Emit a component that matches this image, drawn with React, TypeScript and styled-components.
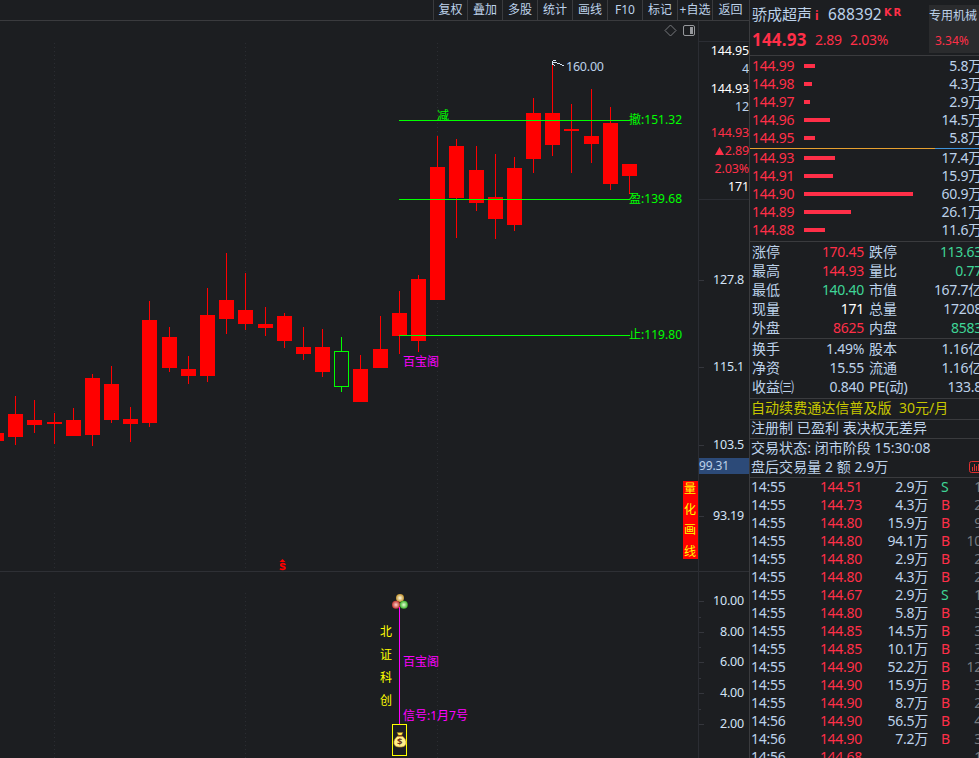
import React from 'react';
import styled, { createGlobalStyle } from 'styled-components';

const sans = '"Noto Sans", "Noto Sans CJK SC", sans-serif';
const c = {
  bg: '#1c1e21',
  line: '#3a3b3e',
  faint: '#2b2d33',
  text: '#bdd2ea',
  white: '#ffffff',
  red: '#ff2f48',
  green: '#3fd597',
  dim: '#777b80',
  yellow: '#c6c600',
};

const Global = createGlobalStyle`
  html, body { margin: 0; padding: 0; background: ${c.bg}; overflow: hidden; }
  * { box-sizing: border-box; }
  svg { display: block; flex: none; }
  svg text { white-space: pre; }
`;

const Page = styled.div`
  width: 979px;
  height: 758px;
  display: flex;
  overflow: hidden;
  background: ${c.bg};
  color: ${c.text};
  font-family: ${sans};
  font-size: 14px;
  white-space: pre;
`;
const Left = styled.main`
  width: 750px;
  flex: none;
  display: flex;
  flex-direction: column;
  border-right: 1px solid ${c.line};
`;
const Toolbar = styled.nav`
  height: 21px;
  flex: none;
  display: flex;
  padding-left: 433px;
  border-bottom: 1px solid ${c.line};
  font-size: 12px;
  line-height: 19px;
`;
const ToolItem = styled.div<{ $w: number }>`
  width: ${p => p.$w}px;
  flex: none;
  border-left: 1px solid ${c.line};
  display: flex;
  justify-content: center;
`;
const ChartArea = styled.div`
  display: flex;
  flex: 1;
`;
const Axis = styled.div`
  width: 51px;
  border-left: 1px solid ${c.faint};
  display: flex;
  flex-direction: column;
  overflow: hidden;
`;
const QuoteBox = styled.div`
  height: 159px;
  flex: none;
  margin-top: 20px;
  width: 50px;
  border-top: 1px solid ${c.faint};
  border-bottom: 1px solid ${c.faint};
  font-size: 12.5px;
  letter-spacing: -0.15px;
  display: flex;
  flex-direction: column;
`;
const QuoteLine = styled.div<{ $color: string; $h: number }>`
  height: ${p => p.$h}px;
  line-height: ${p => p.$h}px;
  color: ${p => p.$color};
  display: flex;
  justify-content: flex-end;
  align-items: center;
`;

const Right = styled.aside`
  width: 232px;
  flex: none;
  display: flex;
  flex-direction: column;
  letter-spacing: -0.28px;
`;
const Header = styled.header`
  height: 56px;
  flex: none;
  display: flex;
  border-bottom: 1px solid ${c.line};
`;
const HeaderMain = styled.div`
  width: 179px;
  flex: none;
  padding: 4px 0 0 2px;
`;
const NameRow = styled.div`
  height: 22px;
  line-height: 20px;
  display: flex;
  font-size: 15px;
  letter-spacing: 0;
`;
const InfoMark = styled.b`
  color: ${c.red};
  font-size: 12px;
  line-height: 24px;
  width: 13px;
  padding-left: 3px;
`;
const Code = styled.span`
  font-size: 15.5px;
  letter-spacing: 0.1px;
  padding-left: 3px;
  width: 58px;
`;
const KR = styled.b`
  color: ${c.red};
  font: bold 10px/18px "DejaVu Sans", sans-serif;
  letter-spacing: 1.8px;
  padding-left: 1px;
`;
const PriceRow = styled.div`
  height: 28px;
  line-height: 28px;
  color: ${c.red};
  display: flex;
`;
const BigPrice = styled.b`
  font-size: 17px;
  letter-spacing: 0.2px;
  width: 63px;
`;
const Change = styled.span`
  width: 35px;
`;
const Industry = styled.div`
  width: 54px;
  height: 48px;
  margin-top: 5px;
  background: #2a2b2d;
  font-size: 12px;
  letter-spacing: 0;
  line-height: 22px;
`;
const IndustryPct = styled.div`
  color: ${c.red};
  padding: 3px 0 0 6px;
`;
const Book = styled.div<{ $bottom?: boolean }>`
  height: 92px;
  flex: none;
  padding-top: ${p => (p.$bottom ? 0 : 1)}px;
`;
const BookRow = styled.div`
  height: 18px;
  line-height: 18px;
  display: flex;
  align-items: center;
`;
const BookPrice = styled.span`
  width: 54px;
  padding-left: 2px;
  color: ${c.red};
`;
const Bar = styled.i<{ $w: number }>`
  width: ${p => p.$w}px;
  height: 4px;
  background: ${c.red};
`;
const BookVol = styled.span`
  margin-left: auto;
`;
const Balance = styled.div`
  height: 1px;
  flex: none;
  display: flex;
  background: #3d93dc;
`;
const BalanceBuy = styled.i`
  width: 185px;
  background: #e6a030;
`;
const Stats = styled.div<{ $h: number }>`
  height: ${p => p.$h}px;
  flex: none;
  border-top: 1px solid ${c.line};
`;
const StatRow = styled.div`
  height: 19px;
  line-height: 19px;
  display: grid;
  grid-template-columns: 50px 62px 5px 50px 1fr;
  padding-left: 2px;
`;
const StatLabel = styled.span`
  letter-spacing: 0;
`;
const Value = styled.span<{ $color?: string }>`
  text-align: right;
  color: ${p => p.$color ?? c.text};
`;
const Note = styled.div<{ $h: number; $color?: string; $plain?: boolean }>`
  height: ${p => p.$h}px;
  line-height: ${p => p.$h - 3}px;
  flex: none;
  padding: 0 0 2px 1px;
  letter-spacing: 0.05px;
  color: ${p => p.$color ?? c.text};
  border-top: ${p => (p.$plain ? 'none' : `1px solid ${c.line}`)};
  display: flex;
  align-items: center;
`;
const NoteIcon = styled.svg`
  margin: 0 -1px 0 auto;
`;
const Ticks = styled.div`
  flex: none;
  border-top: 1px solid ${c.line};
`;
const TickRow = styled.div`
  height: 18px;
  line-height: 18px;
  display: grid;
  grid-template-columns: 35px 76px 66px 29px 1fr;
  padding-left: 1px;
`;
const Side = styled.span<{ $sell: boolean }>`
  color: ${p => (p.$sell ? c.green : c.red)};
  padding-left: 13px;
`;

// [left, body top, body bottom, wick top, wick bottom]
const candles: number[][] = [
  [-11, 433, 441, 433, 441], [8, 414, 437, 396, 445], [27, 420, 425, 400, 433],
  [47, 422, 424, 413, 444], [66, 420, 436, 408, 436], [85, 378, 435, 374, 446],
  [104, 384, 420, 366, 423], [123, 419, 424, 407, 442], [142, 320, 423, 301, 427],
  [162, 337, 368, 327, 372], [181, 369, 376, 356, 384], [200, 315, 376, 288, 382],
  [219, 300, 319, 253, 334], [238, 310, 324, 273, 330], [258, 324, 328, 307, 336],
  [277, 316, 341, 313, 348], [296, 347, 354, 327, 360], [315, 347, 372, 329, 377],
  [353, 369, 402, 355, 402], [373, 349, 368, 316, 368], [392, 313, 336, 291, 354],
  [411, 279, 341, 275, 352], [430, 167, 300, 136, 300], [449, 146, 198, 139, 238],
  [469, 170, 203, 146, 211], [488, 197, 219, 154, 239], [507, 168, 225, 157, 231],
  [526, 113, 159, 98, 173], [545, 113, 145, 64, 156], [564, 129, 131, 104, 173],
  [584, 136, 144, 89, 163], [603, 123, 184, 107, 190], [622, 164, 176, 164, 194],
];

const grid = [54, 245, 437];
const vertical = (chars: string, x: number, ys: number[]) =>
  chars.split('').map((ch, i) => (
    <text key={ch} x={x} y={ys[i]} fontSize="12" fill="#ffff00">{ch}</text>
  ));

function Plot() {
  return (
    <svg width="698" height="737" viewBox="0 21 698 737" shapeRendering="crispEdges" fontFamily={sans} fontSize="12">
      {grid.map(x => (
        <g key={x} stroke="#2b2d32" strokeDasharray="1 3">
          <line x1={x + 0.5} x2={x + 0.5} y1="43" y2="571" />
          <line x1={x + 0.5} x2={x + 0.5} y1="593" y2="758" />
        </g>
      ))}
      <rect x="0" y="571" width="698" height="1" fill="#2e3035" />
      {candles.map(([x, t, b, wt, wb]) => (
        <g key={x} fill="#ff0000">
          <rect x={x + 7} y={wt} width="1" height={wb - wt} />
          <rect x={x} y={t} width="15" height={b - t} />
        </g>
      ))}
      <g stroke="#00ff00" fill="none">
        <rect x="334.5" y="351.5" width="14" height="35" />
        <path d="M341.5 337v14M341.5 387v5" />
        <path d="M399 120.5H630M399 199.5H630M399 335.5H630" />
      </g>
      <g fill="#00ff00">
        <text x="437" y="120">减</text>
        <text x="629" y="124" textLength="53">撤:151.32</text>
        <text x="629" y="203" textLength="53">盈:139.68</text>
        <text x="629" y="339" textLength="53">止:119.80</text>
      </g>
      <g fill="#d4e2f4">
        <rect x="553" y="60" width="3" height="1" />
        <rect x="552" y="61" width="1" height="4" />
        <rect x="553" y="62" width="4" height="1" />
        <rect x="557" y="63" width="3" height="1" />
        <rect x="560" y="64" width="2" height="1" />
        <rect x="562" y="65" width="2" height="1" />
        <rect x="554" y="65" width="1" height="1" />
        <rect x="553" y="64" width="1" height="1" />
      </g>
      <text x="566" y="71" fill={c.text} fontSize="12.5" textLength="38">160.00</text>
      <path d="M670.5 25L676 30.5L670.5 36L665 30.5Z" fill="none" stroke="#77797d" shapeRendering="auto" />
      <g shapeRendering="auto">
        <rect x="683.5" y="25.5" width="11" height="10" rx="1.5" fill="none" stroke="#96989c" />
        <rect x="690" y="27" width="3" height="7" fill="#96989c" />
      </g>
      <rect x="683" y="481" width="15" height="78" fill="#ff0000" />
      {vertical('量化画线', 684, [493, 514, 534, 556])}
      <g stroke="#ff0000" fill="none" strokeWidth="1.8" shapeRendering="auto">
        <path d="M285.6 564.8C283.6 563 280.8 563.4 280.8 565C280.8 567 285.2 566 285.2 568C285.2 569.7 281.6 569.8 280 568.6" />
        <path d="M282.5 559L285.5 562H279.5Z" fill="#ff0000" stroke="none" />
      </g>
      <g fill="#ff00ff">
        <text x="403" y="366" textLength="36">百宝阁</text>
        <text x="403" y="666" textLength="36">百宝阁</text>
        <text x="403" y="720" textLength="65">信号:1月7号</text>
        <rect x="399" y="607" width="1" height="117" />
      </g>
      {vertical('北证科创', 380, [636, 659, 682, 705])}
      <defs>
        <radialGradient id="gold"><stop stopColor="#fffbe4" /><stop offset="1" stopColor="#c0922e" /></radialGradient>
        <radialGradient id="rose"><stop stopColor="#ffd0c8" /><stop offset="1" stopColor="#c03430" /></radialGradient>
        <radialGradient id="leaf"><stop stopColor="#e4ffd4" /><stop offset="1" stopColor="#3cb02c" /></radialGradient>
      </defs>
      <g shapeRendering="auto">
        <circle cx="400" cy="598" r="4" fill="url(#gold)" />
        <circle cx="396" cy="604.8" r="4" fill="url(#rose)" />
        <circle cx="403.8" cy="604.8" r="4" fill="url(#leaf)" />
      </g>
      <rect x="392.5" y="724.5" width="14" height="31" fill="none" stroke="#ffff00" />
      <g shapeRendering="auto">
        <path d="M397 732.5H403L401.5 735.5H398.5Z" fill="#ffe94a" stroke="#8a6420" strokeWidth=".6" />
        <path d="M398 736H402C405 738 406.5 740.5 406 743.5C405.5 746.6 402.5 747 400 747S394.5 746.6 394 743.5C393.6 740.5 395 738 398 736Z" fill="#ffef8c" stroke="#c89a20" strokeWidth=".7" />
        <path d="M397.8 735.8H402.2" stroke="#7b2f12" strokeWidth="1.2" />
        <text x="397" y="745" fontSize="9.5" fontWeight="700" fill="#6b2f18">$</text>
      </g>
    </svg>
  );
}

const priceTicks: [string, number][] = [['127.8', 280], ['115.1', 367], ['103.5', 445], ['93.19', 516]];
const subTicks: [string, number][] = [['10.00', 601], ['8.00', 632], ['6.00', 662], ['4.00', 693], ['2.00', 724]];

function Scale() {
  return (
    <svg width="50" height="558" viewBox="699 200 50 558" shapeRendering="crispEdges" fontFamily={sans} fontSize="12.5" fill="#d3e3f6">
      {[...priceTicks, ...subTicks].map(([s, y]) => (
        <g key={s}>
          <rect x="699" y={y} width="5" height="1" fill="#34363c" />
          <text x="744" y={y + 4} textAnchor="end" letterSpacing="-0.2">{s}</text>
        </g>
      ))}
      {[617, 647, 678, 709].map(y => <rect key={y} x="699" y={y} width="2" height="1" fill="#34363c" />)}
      <rect x="699" y="458" width="50" height="16" fill="#2c4a78" />
      <text x="699" y="470" fill={c.text} fontSize="12" textLength="30">99.31</text>
      <rect x="699" y="571" width="50" height="1" fill="#2e3035" />
    </svg>
  );
}

const tools: [string, number][] = [
  ['复权', 34], ['叠加', 35], ['多股', 35], ['统计', 35], ['画线', 35], ['F10', 35], ['标记', 35], ['+自选', 35], ['返回', 36],
];
const asks: [string, number, string][] = [
  ['144.99', 11, '5.8万'], ['144.98', 8, '4.3万'], ['144.97', 6, '2.9万'], ['144.96', 26, '14.5万'], ['144.95', 11, '5.8万'],
];
const bids: [string, number, string][] = [
  ['144.93', 31, '17.4万'], ['144.91', 29, '15.9万'], ['144.90', 109, '60.9万'], ['144.89', 47, '26.1万'], ['144.88', 21, '11.6万'],
];
type Stat = [string, string, string, string, string?, string?];
const stats1: Stat[] = [
  ['涨停', '170.45', '跌停', '113.63', c.red, c.green],
  ['最高', '144.93', '量比', '0.77', c.red, c.green],
  ['最低', '140.40', '市值', '167.7亿', c.green],
  ['现量', '171', '总量', '17208', c.white],
  ['外盘', '8625', '内盘', '8583', c.red, c.green],
];
const stats2: Stat[] = [
  ['换手', '1.49%', '股本', '1.16亿'],
  ['净资', '15.55', '流通', '1.16亿'],
  ['收益㈢', '0.840', 'PE(动)', '133.8'],
];
const ticks: string[][] = [
  ['14:55', '144.51', '2.9万', 'S', '1'], ['14:55', '144.73', '4.3万', 'B', '2'],
  ['14:55', '144.80', '15.9万', 'B', '9'], ['14:55', '144.80', '94.1万', 'B', '10'],
  ['14:55', '144.80', '2.9万', 'B', '2'], ['14:55', '144.80', '4.3万', 'B', '2'],
  ['14:55', '144.67', '2.9万', 'S', '1'], ['14:55', '144.80', '5.8万', 'B', '3'],
  ['14:55', '144.85', '14.5万', 'B', '3'], ['14:55', '144.85', '10.1万', 'B', '3'],
  ['14:55', '144.90', '52.2万', 'B', '12'], ['14:55', '144.90', '15.9万', 'B', '3'],
  ['14:55', '144.90', '8.7万', 'B', '2'], ['14:56', '144.90', '56.5万', 'B', '4'],
  ['14:56', '144.90', '7.2万', 'B', '3'], ['14:56', '144.68', '', '', '1'],
];

function Level({ rows, bottom }: { rows: [string, number, string][]; bottom?: boolean }) {
  return (
    <Book $bottom={bottom}>
      {rows.map(([price, w, vol]) => (
        <BookRow key={price}>
          <BookPrice>{price}</BookPrice>
          <Bar $w={w} />
          <BookVol>{vol}</BookVol>
        </BookRow>
      ))}
    </Book>
  );
}

function StatGroup({ rows, h }: { rows: Stat[]; h: number }) {
  return (
    <Stats $h={h}>
      {rows.map(([a, av, b, bv, ac, bc]) => (
        <StatRow key={a}>
          <StatLabel>{a}</StatLabel>
          <Value $color={ac}>{av}</Value>
          <span />
          <StatLabel>{b}</StatLabel>
          <Value $color={bc}>{bv}</Value>
        </StatRow>
      ))}
    </Stats>
  );
}

export default function App() {
  return (
    <Page>
      <Global />
      <Left>
        <Toolbar>
          {tools.map(([t, w]) => <ToolItem key={t} $w={w}>{t}</ToolItem>)}
        </Toolbar>
        <ChartArea>
          <Plot />
          <Axis>
            <QuoteBox>
              <QuoteLine $h={17} $color={c.white}>144.95</QuoteLine>
              <QuoteLine $h={20} $color={c.text}>4</QuoteLine>
              <QuoteLine $h={19} $color={c.white}>144.93</QuoteLine>
              <QuoteLine $h={17} $color={c.text}>12</QuoteLine>
              <QuoteLine $h={35} $color={c.red}>144.93</QuoteLine>
              <QuoteLine $h={1} $color={c.red}>
                <svg width="10" height="9" viewBox="0 0 10 9"><path d="M4.5 1L9 9H0Z" fill={c.red} /></svg>2.89
              </QuoteLine>
              <QuoteLine $h={35} $color={c.red}>2.03%</QuoteLine>
              <QuoteLine $h={1} $color={c.white}>171</QuoteLine>
            </QuoteBox>
            <Scale />
          </Axis>
        </ChartArea>
      </Left>
      <Right>
        <Header>
          <HeaderMain>
            <NameRow>骄成超声<InfoMark>i</InfoMark><Code>688392</Code><KR>KR</KR></NameRow>
            <PriceRow><BigPrice>144.93</BigPrice><Change>2.89</Change><span>2.03%</span></PriceRow>
          </HeaderMain>
          <Industry>专用机械<IndustryPct>3.34%</IndustryPct></Industry>
        </Header>
        <Level rows={asks} />
        <Balance><BalanceBuy /></Balance>
        <Level rows={bids} bottom />
        <StatGroup rows={stats1} h={97} />
        <StatGroup rows={stats2} h={60} />
        <Note $h={21} $color={c.yellow}>自动续费通达信普及版  30元/月</Note>
        <Note $h={19}>注册制 已盈利 表决权无差异</Note>
        <Note $h={20}>交易状态: 闭市阶段 15:30:08</Note>
        <Note $h={19} $plain>
          盘后交易量 2 额 2.9万
          <NoteIcon width="14" height="12" viewBox="0 0 14 12">
            <rect x=".5" y=".5" width="13" height="11" rx="2" fill="none" stroke="#e03030" />
            <path d="M3.5 10V6M5.5 10V3M7.5 10V5M9.5 10V3" stroke="#e03030" />
          </NoteIcon>
        </Note>
        <Ticks>
          {ticks.map(([time, price, vol, side, n], i) => (
            <TickRow key={i}>
              <span>{time}</span>
              <Value $color={c.red}>{price}</Value>
              <Value>{vol}</Value>
              <Side $sell={side === 'S'}>{side}</Side>
              <Value $color={c.dim}>{n}</Value>
            </TickRow>
          ))}
        </Ticks>
      </Right>
    </Page>
  );
}
